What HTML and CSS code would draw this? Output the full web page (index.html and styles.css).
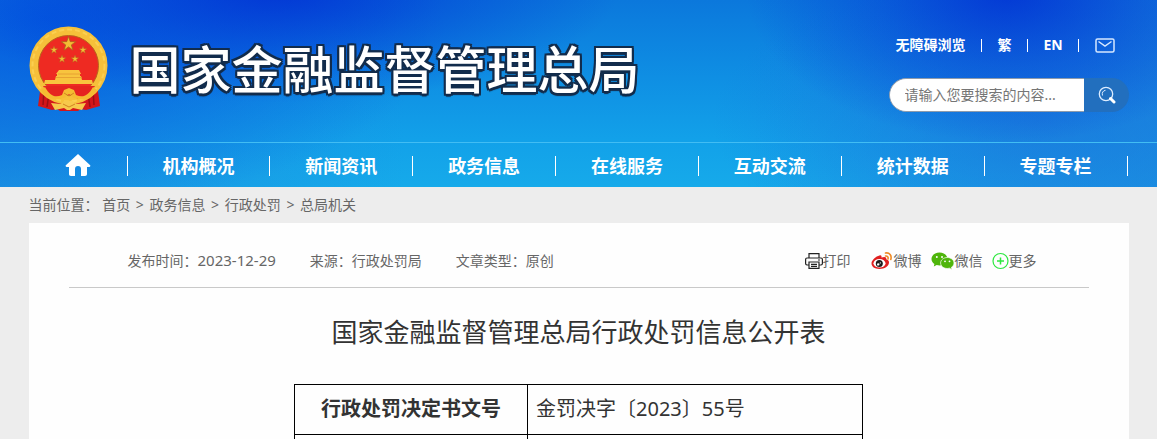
FILE: index.html
```
<!DOCTYPE html>
<html lang="zh-CN">
<head>
  <meta charset="UTF-8">
  <title>国家金融监督管理总局</title>
  <link rel="stylesheet" href="styles.css">
</head>
<body>

  <header class="header">
    <div class="wrap header-top">
      <a class="brand" href="#">
        <svg class="emblem" viewBox="0 0 80 86" aria-hidden="true">
          <defs>
            <path id="star" d="M0-10 2.3-3.1 9.5-3.1 3.7 1.2 5.9 8.1 0 3.8-5.9 8.1-3.7 1.2-9.5-3.1-2.3-3.1z"/>
          </defs>
          <path d="M12 58 9 80l7 2 7 2 5-1 3 2h18l3-2 5 1 7-2 7-2-3-22z" fill="#d3161b"/>
          <path d="M15 64l-1 15M20 67l-2 14M64 64l1 15M59 67l2 14" stroke="#9b1014" stroke-width="1.5"/>
          <circle cx="39.500" cy="39.500" r="34.500" fill="#ee2a22" stroke="#f6c03a" stroke-width="9"/>
          <circle cx="39.500" cy="39.500" r="36" fill="none" stroke="#fbcf50" stroke-width="2" stroke-dasharray="5 3"/>
          <circle cx="39.500" cy="39.500" r="30" fill="none" stroke="#b8651b"/>
          <g fill="#f4bd35" stroke="#a9641b" stroke-width="1">
            <use href="#star" transform="translate(39.500 18) scale(.76)"/>
            <use href="#star" transform="translate(25 24) scale(.4)"/>
            <use href="#star" transform="translate(54 24) scale(.4)"/>
            <use href="#star" transform="translate(33 33) scale(.4)"/>
            <use href="#star" transform="translate(46 33) scale(.4)"/>
          </g>
          <path d="M30 44h20l2 4h-1v2h1l1 4h10l1 4H15l1-4h10l1-4h1v-2h-1z" fill="#f8c43e"/>
          <path d="M29 48h22M27 51.500h26" stroke="#e29a30" stroke-width=".8"/>
          <path d="M14 60h52l-7 10-10 3-9-6-10 6-10-3z" fill="#e52420"/>
          <path d="M16 61c5 9 10 11 17 8l2-5 5-2 5 2 2 5c7 3 12 1 17-8l4 3c-5 9-13 11-23 8l-5-4-5 4c-10 3-18 1-23-8z" fill="#f5bb32"/>
          <path d="m22 77 10 1 3-3h9l3 3 10-1-4 7-9-2-3 2h-3l-3-2-9 2z" fill="#f7c84b"/>
          <path d="M35 67l5 3 5-3M34 78l6 3 6-3" fill="none" stroke="#d18421"/>
        </svg>
        <span class="brand-name">国家金融监督管理总局</span>
      </a>

      <div class="tools">
        <div class="links">
          <a href="#">无障碍浏览</a>
          <a href="#">繁</a>
          <a href="#">EN</a>
          <a href="#" aria-label="邮箱">
            <svg class="mail" viewBox="0 0 20 15" fill="none" stroke="#d6e8ff" stroke-width="1.5">
              <rect x="1" y="1" width="18" height="13" rx="1.500"/>
              <path d="m3.500 3.500 6.500 4.500 6.500-4.500"/>
            </svg>
          </a>
        </div>
        <form class="search">
          <input type="text" placeholder="请输入您要搜索的内容..." aria-label="搜索">
          <button type="button" aria-label="搜索">
            <svg viewBox="0 0 18 18" fill="none" stroke="#dcecff">
              <circle cx="8" cy="8" r="6.700" stroke-width="1.300"/>
              <path d="M4.500 9.500C3.600 7 5 4.500 7.500 4.300"/>
              <path d="m12.500 12.500 3.500 3.500" stroke="#fff" stroke-width="3" stroke-linecap="round"/>
            </svg>
          </button>
        </form>
      </div>
    </div>

    <nav class="nav">
      <div class="wrap nav-list">
        <a href="#" aria-label="首页">
          <svg class="home" viewBox="0 0 26 24"><path d="M13 1 .8 12.300c-.5.700 0 1.700.9 1.700H4v7c0 1 .7 2 2 2h4v-7c0-2 1-3 3-3s3 1 3 3v7h4c1.300 0 2-1 2-2v-7h2.300c.9 0 1.400-1 .9-1.700z" fill="#fff"/></svg>
        </a>
        <a href="#">机构概况</a>
        <a href="#">新闻资讯</a>
        <a href="#">政务信息</a>
        <a href="#">在线服务</a>
        <a href="#">互动交流</a>
        <a href="#">统计数据</a>
        <a href="#">专题专栏</a>
      </div>
    </nav>
  </header>

  <div class="wrap crumbs">
    <span>当前位置：</span>
    <a href="#">首页</a>
    <i>&gt;</i>
    <a href="#">政务信息</a>
    <i>&gt;</i>
    <a href="#">行政处罚</a>
    <i>&gt;</i>
    <a href="#">总局机关</a>
  </div>

  <main class="wrap article">
    <div class="meta">
      <span>发布时间：<time datetime="2023-12-29">2023-12-29</time></span>
      <span>来源：行政处罚局</span>
      <span>文章类型：原创</span>
      <div class="share">
        <a class="print" href="#">
          <svg width="18" height="18" viewBox="0 0 18 18" fill="none" stroke="#222" stroke-width="1.200">
            <path d="M4 6V1.600h10V6M4 13H2c-.8 0-1.400-.6-1.400-1.400V7.400C.6 6.600 1.200 6 2 6h14c.8 0 1.400.6 1.400 1.400v4.200c0 .8-.6 1.400-1.400 1.400h-2"/>
            <path d="M4 10h10v6.400H4zM6 12.300h6M6 14.400h6M13 8h2"/>
          </svg>打印</a>
        <a class="weibo" href="#">
          <svg width="22" height="18" viewBox="0 0 22 18">
            <path d="M8.500 3.500c1.600-.5 2.400.5 1.900 2 3-1.200 5.500-.7 4.800 1.800 1.900.6 3 1.700 2.800 3.500-.3 3.500-4.500 6.200-9.500 6.200S.5 14.700.5 11.300C.5 8.200 5 4.300 8.500 3.500z" fill="#e02020"/>
            <ellipse cx="8.500" cy="11.300" rx="6" ry="4.300" fill="#fff"/>
            <circle cx="8.300" cy="11.500" r="3.500" fill="#1c1c1c"/>
            <circle cx="7.200" cy="12.400" r="1.200" fill="#fff"/>
            <circle cx="9.300" cy="10.900" r=".6" fill="#fff"/>
            <path d="M14.500 1c4-.8 6.500 2.500 5.300 6.500M14.500 4c2-.3 3 1 2.500 3" fill="none" stroke="#f08a24" stroke-width="1.600" stroke-linecap="round"/>
          </svg>微博</a>
        <a class="wechat" href="#">
          <svg width="24" height="18" viewBox="0 0 24 18">
            <path d="M8.500.5C4 .5.500 3.300.5 7c0 2 1.100 3.800 2.900 5L2.800 14.500l2.900-1.500c.9.300 1.900.4 2.800.4C13 13.400 16.500 10.600 16.500 7S13 .5 8.500.5z" fill="#4fb50b"/>
            <path d="M16.300 5.500c-3.700 0-6.700 2.400-6.700 5.500s3 5.500 6.700 5.500c.8 0 1.600-.1 2.300-.3l2.400 1.500-.6-2.400c1.600-1 2.600-2.500 2.600-4.300 0-3.100-3-5.500-6.700-5.500z" fill="#4fb50b" stroke="#fff" stroke-width=".7"/>
            <g fill="#fff"><circle cx="5.800" cy="4.900" r="1"/><circle cx="11" cy="4.900" r="1"/><circle cx="14" cy="9.300" r=".9"/><circle cx="18.500" cy="9.300" r=".9"/></g>
          </svg>微信</a>
        <a class="more" href="#">
          <svg width="17" height="18" viewBox="0 0 17 18" fill="none" stroke="#2de83f" stroke-width="1.200">
            <circle cx="8.500" cy="9" r="7.500"/>
            <path d="M8.500 5.500v7M5 9h7" stroke-width="1.500"/>
          </svg>更多</a>
      </div>
    </div>

    <h1>国家金融监督管理总局行政处罚信息公开表</h1>

    <table>
      <tbody>
        <tr>
          <th scope="row">行政处罚决定书文号</th>
          <td>金罚决字〔2023〕55号</td>
        </tr>
        <tr>
          <th scope="row"></th>
          <td></td>
        </tr>
      </tbody>
    </table>
  </main>

</body>
</html>
```
FILE: styles.css
```
:root {
  --bg: #ededed;
  --text: #333;
  --muted: #666;
  --line: #c9c9c9;
}

* { box-sizing: border-box; }

body {
  margin: 0;
  height: 100vh;
  overflow: hidden;
  background: var(--bg);
  color: var(--text);
  font-family: "Noto Sans", "Noto Sans CJK SC", sans-serif;
  font-size: 14px;
  line-height: 20px;
}
a { color: inherit; text-decoration: none; }
svg { display: block; flex: none; }

.wrap {
  max-width: 1100px;
  margin: 0 auto;
}

/* header */
.header {
  color: #fff;
  background:
    radial-gradient(ellipse 340px 110px at 24% -4%, rgba(2, 50, 212, .9), rgba(2, 57, 214, .45) 50%, rgba(2, 57, 214, 0)),
    radial-gradient(ellipse 260px 150px at 87% -4%, rgba(2, 50, 212, .9), rgba(2, 57, 214, .45) 50%, rgba(2, 57, 214, 0)),
    radial-gradient(ellipse 400px 190px at 4% 10%, rgba(0, 85, 225, .85), rgba(0, 85, 225, 0)),
    radial-gradient(ellipse 330px 150px at 90% 65%, rgba(28, 110, 218, .6), rgba(28, 110, 218, 0)),
    linear-gradient(to right, rgba(30, 130, 220, .6), rgba(30, 130, 220, 0) 35%),
    linear-gradient(to left, rgba(30, 130, 220, .5), rgba(30, 130, 220, 0) 35%),
    linear-gradient(#0b78dc, #12a1e9 75%, #16aaea);
}
.header-top {
  display: flex;
  justify-content: space-between;
  height: 142px;
}
.brand {
  display: flex;
  align-items: center;
  gap: 21px;
  height: 138px;
}
.emblem { width: 80px; height: 86px; }
.brand-name {
  font-size: 51px;
  font-weight: 500;
  line-height: 60px;
  white-space: nowrap;
  text-shadow:
    2px 0 #122c4c, -2px 0 #122c4c, 0 2px #122c4c, 0 -2px #122c4c,
    2px 2px #122c4c, -2px 2px #122c4c, 2px -2px #122c4c, -2px -2px #122c4c,
    0 3px 1px #122c4c;
}

.tools { padding-top: 35px; }
.links {
  display: flex;
  align-items: center;
  padding-left: 7px;
  font-weight: 700;
}
.links a {
  display: flex;
  align-items: center;
}
.links a + a::before {
  content: "";
  width: 1px;
  height: 13px;
  margin: 0 16px 0 15px;
  background: #fff;
}
.mail { width: 20px; height: 15px; }
.search {
  display: flex;
  width: 240px;
  height: 34px;
  margin-top: 23px;
  overflow: hidden;
  border-radius: 17px;
}
.search input {
  flex: 1;
  min-width: 0;
  padding: 0 15px;
  border: 1px solid #8e9bab;
  border-right: 0;
  border-radius: 17px 0 0 17px;
  background: #fff;
  color: var(--text);
  font: inherit;
}
.search input::placeholder { color: #757575; }
.search button {
  display: flex;
  align-items: center;
  width: 45px;
  padding: 0 14px;
  border: 0;
  background: #226fbe;
  cursor: pointer;
}
.search svg { width: 18px; height: 18px; }

/* main nav */
.nav { border-top: 1px solid #42bdf3; }
.nav-list {
  display: grid;
  grid-template-columns: 99px repeat(7, 1fr);
  align-items: center;
  height: 44px;
  padding: 2px 1px 0 0;
}
.nav-list a {
  display: flex;
  justify-content: center;
  border-right: 1px solid #fff;
  font-size: 18px;
  font-weight: 700;
}
.home { width: 26px; height: 24px; margin: -3px 0 -1px; }

/* breadcrumb */
.crumbs {
  padding: 8px 0;
  color: var(--muted);
}
.crumbs i {
  margin: 0 2px;
  font-style: normal;
}

/* article */
.article {
  padding: 0 40px;
  background: #fefefe;
}
.meta {
  display: flex;
  align-items: center;
  gap: 34px;
  height: 65px;
  padding: 11px 52px 0 59px;
  border-bottom: 1px solid var(--line);
  color: var(--muted);
}
.meta time { font-size: 15px; }
.share {
  display: flex;
  gap: 9px;
  margin-left: auto;
}
.share a {
  display: flex;
  align-items: center;
}
.print { margin-right: 11px; }
.weibo svg { margin-right: 1px; }

h1 {
  margin: 26px 0 34px;
  font-size: 26px;
  font-weight: 400;
  line-height: 36px;
  text-align: center;
}

table {
  width: 569px;
  max-width: 100%;
  margin: 0 auto;
  border-collapse: collapse;
  font-size: 20px;
}
th, td {
  height: 50px;
  padding: 0 8px 2px;
  border: 1px solid #000;
}
th { width: 233px; }
```
